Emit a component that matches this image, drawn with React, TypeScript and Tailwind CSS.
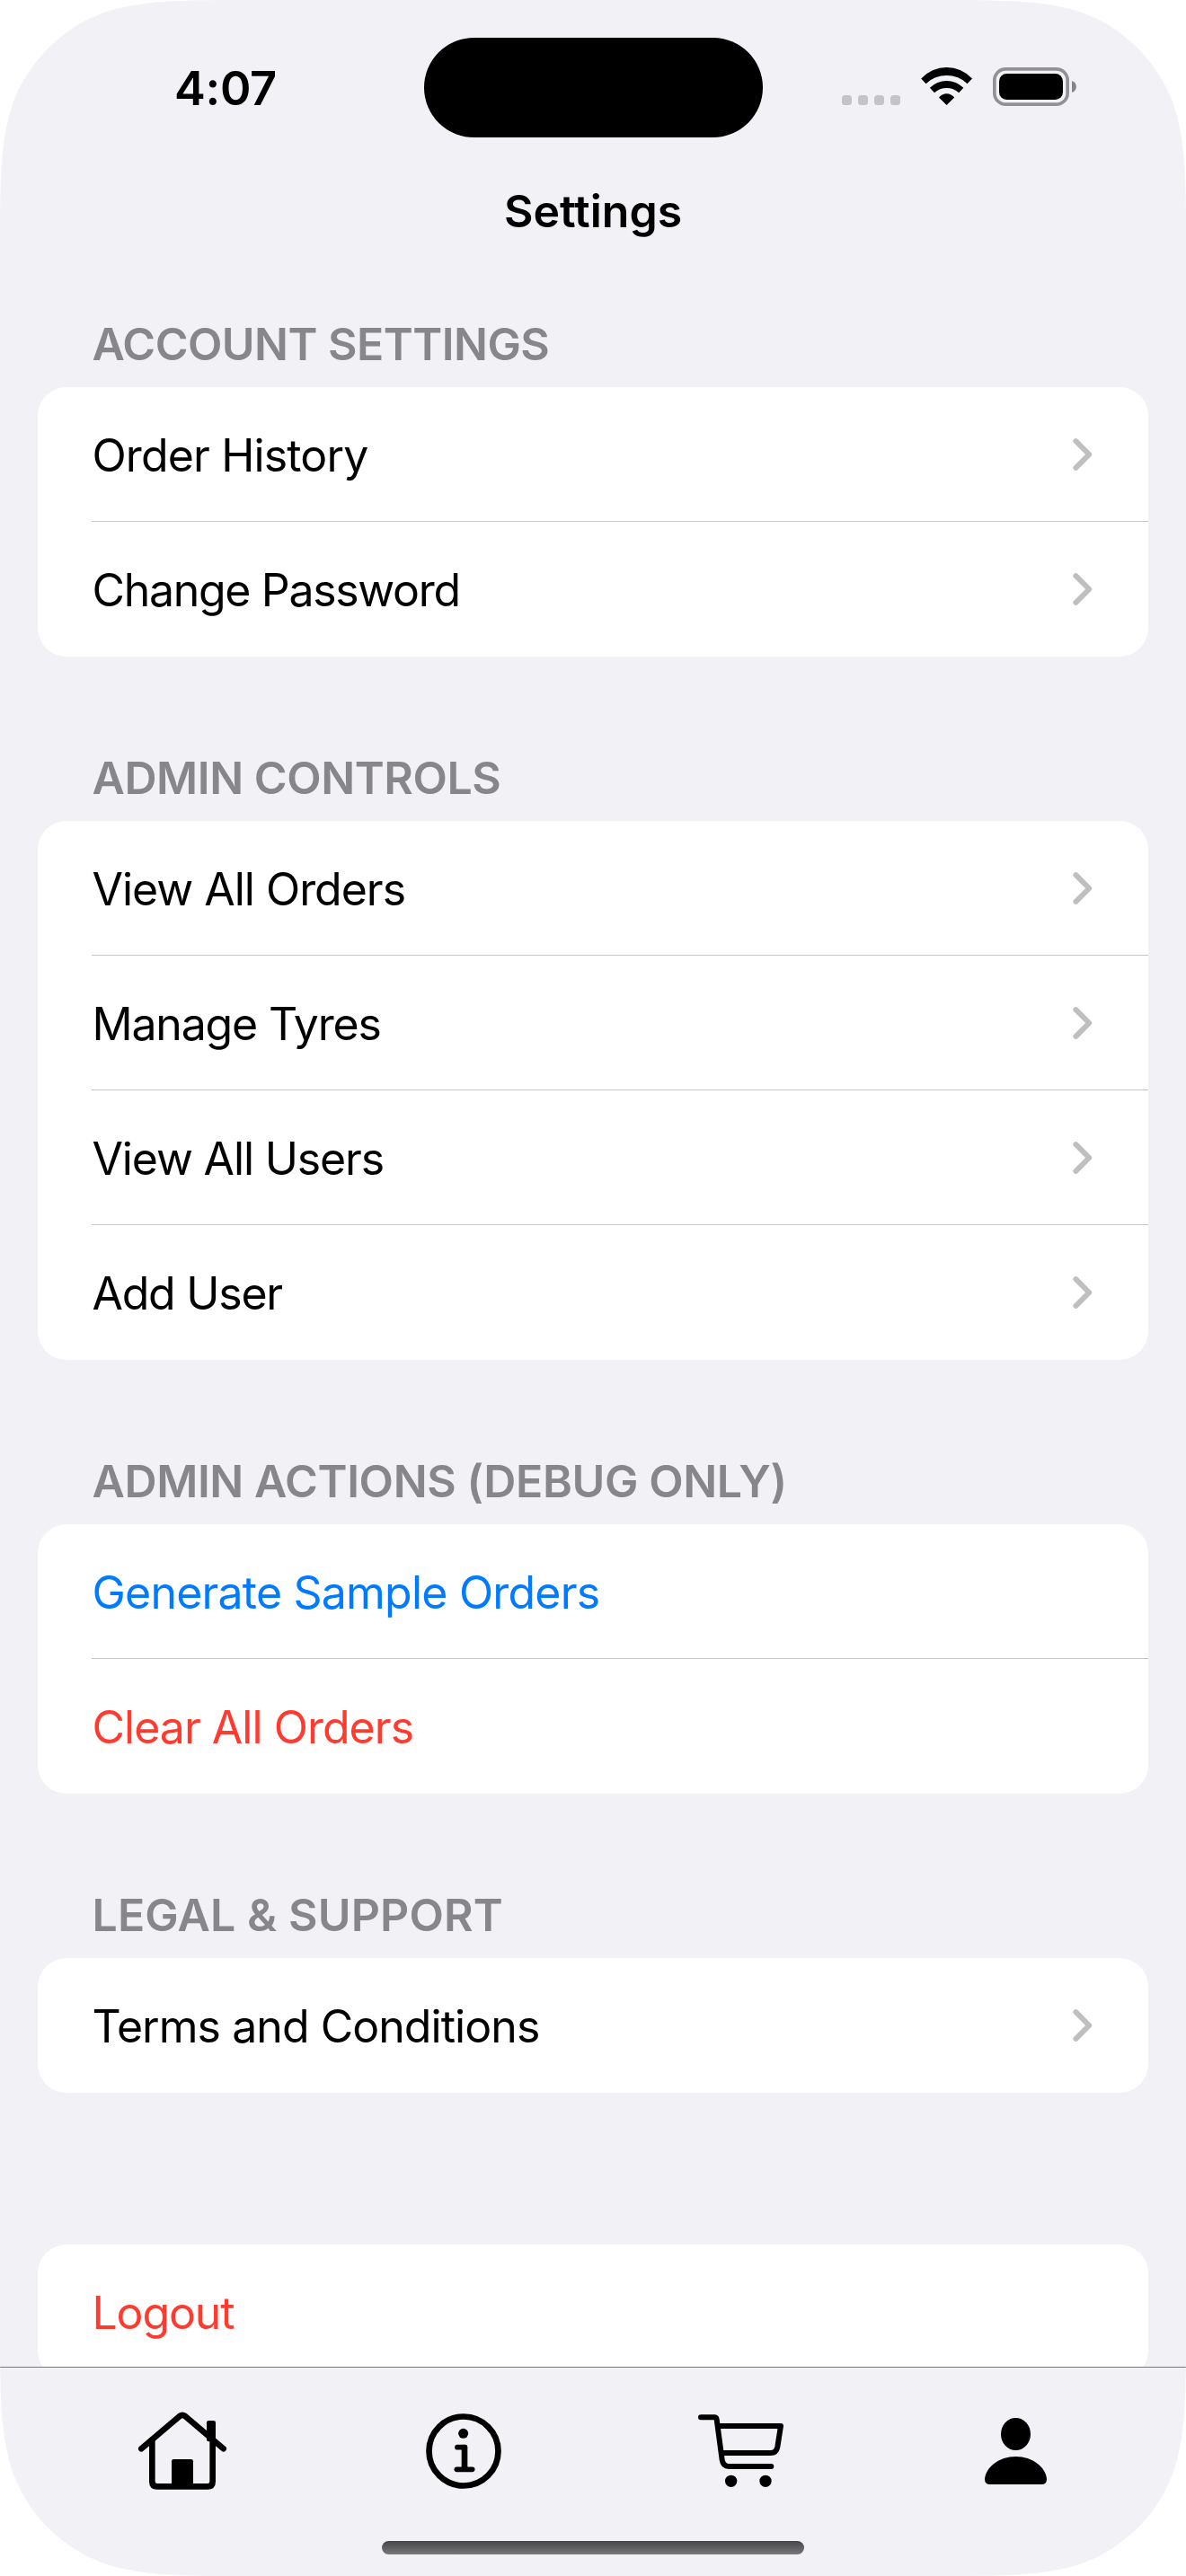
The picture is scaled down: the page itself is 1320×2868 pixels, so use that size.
import type { ReactNode } from "react";

type Row = { label: string; className: string; chevron?: boolean };
type Section = { title?: string; titleClass?: string; rows: Row[] };

const sections: Section[] = [
  {
    title: "ACCOUNT SETTINGS",
    titleClass: "tracking-[-0.54px]",
    rows: [
      { label: "Order History", className: "tracking-[-0.86px] text-black", chevron: true },
      { label: "Change Password", className: "tracking-[-1.32px] text-black", chevron: true },
    ],
  },
  {
    title: "ADMIN CONTROLS",
    titleClass: "tracking-[-0.45px]",
    rows: [
      { label: "View All Orders", className: "tracking-[-1.02px] text-black", chevron: true },
      { label: "Manage Tyres", className: "tracking-[-1.19px] text-black", chevron: true },
      { label: "View All Users", className: "tracking-[-1.15px] text-black", chevron: true },
      { label: "Add User", className: "tracking-[-1.25px] text-black", chevron: true },
    ],
  },
  {
    title: "ADMIN ACTIONS (DEBUG ONLY)",
    titleClass: "tracking-[-0.4px]",
    rows: [
      { label: "Generate Sample Orders", className: "tracking-[-0.79px] text-[#007aff]" },
      { label: "Clear All Orders", className: "tracking-[-0.98px] text-[#ff3b30]" },
    ],
  },
  {
    title: "LEGAL & SUPPORT",
    titleClass: "tracking-[0.13px]",
    rows: [
      { label: "Terms and Conditions", className: "tracking-[-0.95px] text-black", chevron: true },
    ],
  },
  { rows: [{ label: "Logout", className: "tracking-[-1.15px] text-[#ff3b30]" }] },
];

function Chevron() {
  return (
    <svg className="h-[36px] w-[22px]" viewBox="0 0 22 36" fill="none" stroke="#bfbfbf" strokeWidth="6" strokeLinecap="round" strokeLinejoin="round">
      <path d="M3.4 3.2 18.2 18 3.4 32.8" />
    </svg>
  );
}

function Wifi() {
  return (
    <svg className="h-[44px] w-[60px]" viewBox="0 0 60 44" fill="#000">
      <path d="M1.2 13.6A38.5 38.5 0 0 1 58 13.6L52.6 19.2A33.3 33.3 0 0 0 6.6 19.2Z" />
      <path d="M10.9 23.8A26.3 26.3 0 0 1 48.3 23.8L43.2 29.3A20.1 20.1 0 0 0 16 29.3Z" />
      <path d="M21 34.4A11.2 11.2 0 0 1 38.2 34.4L29.6 43Z" />
    </svg>
  );
}

function Battery() {
  return (
    <svg className="h-[44px] w-[94px]" viewBox="0 0 94 44">
      <rect x="1.85" y="2.85" width="81.3" height="39.3" rx="12.5" fill="none" stroke="#929194" strokeWidth="3.7" />
      <rect x="7" y="8" width="71" height="29" rx="8.5" fill="#000" />
      <path d="M88 16C94.5 18 94.5 27 88 29Z" fill="#858487" />
    </svg>
  );
}

function StatusBar() {
  return (
    <div className="grid h-[194px] grid-cols-[472px_377px_1fr] items-center">
      <div className="pt-[2px] pl-[194px] text-[52.3px] leading-[60px] font-semibold tracking-[-0.3px]">4:07</div>
      <div className="h-[111px] rounded-full bg-black" />
      <div className="flex items-center pl-[88px]">
        <div className="flex gap-[7px] pt-[29px]">
          {[0, 1, 2, 3].map((i) => (
            <span key={i} className="size-[11px] rounded-[3.5px] bg-[#c4c3c8]" />
          ))}
        </div>
        <div className="-mt-[2px] ml-[22px] flex gap-[21px]">
          <Wifi />
          <Battery />
        </div>
      </div>
    </div>
  );
}

function TabIcon({ children, className }: { children: ReactNode; className: string }) {
  return (
    <button className={className}>
      <svg className="h-[140px] w-[180px]" viewBox="0 0 540 420" fill="none" stroke="#000" strokeWidth="20" strokeLinecap="round" strokeLinejoin="round">
        {children}
      </svg>
    </button>
  );
}

function TabBar() {
  return (
    <nav className="flex h-[233px] flex-col border-t border-[#77777b]">
      <div className="flex pt-[24px] pl-[120px]">
        <TabIcon className="">
          <path d="M112 199 240 90Q249 83 258 90L386 199" />
          <path d="M148 170V308Q148 325 165 325H333Q350 325 350 308V170" />
          <rect x="330" y="105" width="30" height="70" rx="7" fill="#000" stroke="none" />
          <rect x="213" y="234" width="72" height="92" rx="7" fill="#000" stroke="none" />
        </TabIcon>
        <TabIcon className="ml-[140px]">
          <circle cx="228" cy="207" r="115.5" />
          <circle cx="227" cy="148" r="16.5" fill="#000" stroke="none" />
          <path d="M207 194H232" strokeWidth="17" />
          <path d="M231 195V264" />
          <path d="M205 268H257" strokeWidth="17" />
        </TabIcon>
        <TabIcon className="ml-[130px]">
          <g strokeWidth="18">
            <path d="M90 94H135Q142 94 143 101L161 236Q164 258 184 258H325" />
            <path d="M148 123H357L346 193Q342 213 323 213H162" />
          </g>
          <circle cx="191" cy="307" r="20" fill="#000" stroke="none" />
          <circle cx="306" cy="307" r="20" fill="#000" stroke="none" />
        </TabIcon>
        <TabIcon className="ml-[130px]">
          <ellipse cx="211.5" cy="150" rx="49.5" ry="54" fill="#000" stroke="none" />
          <path d="M108 300C111 262 155 225 211.5 225C268 225 312 262 315 300Q315 318 298 318H125Q108 318 108 300Z" fill="#000" stroke="none" />
        </TabIcon>
      </div>
      <div className="mx-auto mt-[29px] h-[15px] w-[470px] rounded-full bg-linear-to-b from-[#474749] to-[#78787b]" />
    </nav>
  );
}

function Group({ section }: { section: Section }) {
  return (
    <section>
      {section.title && (
        <h2 className={`mb-[18px] h-[60px] pl-[102.5px] text-[50px] leading-[60px] font-semibold whitespace-nowrap text-[#87868b] ${section.titleClass}`}>
          {section.title}
        </h2>
      )}
      <ul className="mx-[42px] overflow-hidden rounded-[32px] bg-white">
        {section.rows.map((row, i) => (
          <li
            key={row.label}
            className={`ml-[60px] flex h-[150px] items-center justify-between pr-[62px] ${i < section.rows.length - 1 ? "shadow-[inset_0_-1px_0_#c6c6c8]" : ""}`}
          >
            <span className={`pt-[2px] pl-[0.5px] text-[50px] leading-[60px] whitespace-nowrap ${row.className}`}>{row.label}</span>
            {row.chevron && <Chevron />}
          </li>
        ))}
      </ul>
    </section>
  );
}

export default function App() {
  return (
    <div className="flex h-[2868px] w-[1320px] flex-col bg-[#f2f1f6] font-['Inter',sans-serif] text-black [clip-path:path('M281.3_0C200.3_0_159.8_0_116.2_13.8C68.6_31.1_31.1_68.6_13.8_116.2C0_159.8_0_200.3_0_281.3V2586.7C0_2667.7_0_2708.2_13.8_2751.8C31.1_2799.4_68.6_2836.9_116.2_2854.2C159.8_2868_200.3_2868_281.3_2868H1038.7C1119.7_2868_1160.2_2868_1203.8_2854.2C1251.4_2836.9_1288.9_2799.4_1306.2_2751.8C1320_2708.2_1320_2667.7_1320_2586.7V281.3C1320_200.3_1320_159.8_1306.2_116.2C1288.9_68.6_1251.4_31.1_1203.8_13.8C1160.2_0_1119.7_0_1038.7_0Z')]">
      <StatusBar />
      <h1 className="h-[82px] text-center text-[50px] leading-[82px] font-semibold">Settings</h1>
      <main className="flex h-[2359px] flex-col gap-[105px] overflow-hidden pt-[77px]">
        {sections.slice(0, 4).map((s) => (
          <Group key={s.title} section={s} />
        ))}
        <div className="pt-[64px]">
          <Group section={sections[4]} />
        </div>
      </main>
      <TabBar />
    </div>
  );
}
